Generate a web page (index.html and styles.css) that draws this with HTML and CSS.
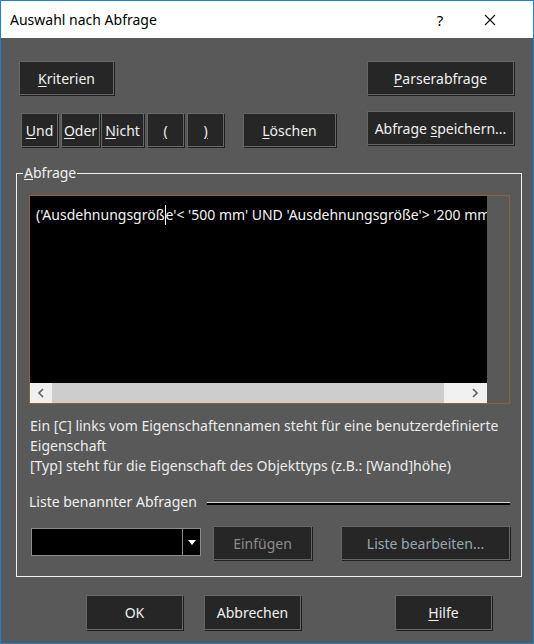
FILE: index.html
```html
<!DOCTYPE html>
<html lang="de">
<head>
  <meta charset="UTF-8">
  <title>Auswahl nach Abfrage</title>
  <link rel="stylesheet" href="styles.css">
</head>
<body>
  <div class="window">

    <!-- TITLE BAR -->
    <div class="titlebar">
      <span class="title">Auswahl nach Abfrage</span>
      <span class="help">?</span>
      <span class="close">
        <svg width="12" height="12" viewBox="0 0 12 12"><path d="M1 1 L11 11 M11 1 L1 11" stroke="#111" stroke-width="1.1" fill="none"/></svg>
      </span>
    </div>

    <div class="content">

      <!-- TOP BUTTONS -->
      <div class="row row-one">
        <button class="btn btn-kriterien"><u>K</u>riterien</button>
        <button class="btn btn-wide"><u>P</u>arserabfrage</button>
      </div>

      <div class="row row-two">
        <div class="ops">
          <button class="btn op-und"><u>U</u>nd</button>
          <button class="btn op-oder"><u>O</u>der</button>
          <button class="btn op-nicht"><u>N</u>icht</button>
          <button class="btn op-par"><u>(</u></button>
          <button class="btn op-par"><u>)</u></button>
          <button class="btn op-loeschen"><u>L</u>öschen</button>
        </div>
        <button class="btn btn-wide btn-save">Abfrage <u>s</u>peichern...</button>
      </div>

      <!-- QUERY GROUP -->
      <fieldset class="group">
        <legend><u>A</u>bfrage</legend>

        <div class="editor">
          <div class="editor-main">
            <div class="editor-text">
              <span class="line">('Ausdehnungsgrö<span class="ss">ß</span><span class="caret"></span>e'&lt; '500 mm' UND 'Ausdehnungsgröße'&gt; '200 mm')</span>
            </div>
            <div class="hscroll">
              <div class="arrow">
                <svg width="8" height="10" viewBox="0 0 8 10"><path d="M6 1 L2 5 L6 9" stroke="#606060" stroke-width="1.6" fill="none"/></svg>
              </div>
              <div class="thumb"></div>
              <div class="arrow arrow-right">
                <svg width="8" height="10" viewBox="0 0 8 10"><path d="M2 1 L6 5 L2 9" stroke="#606060" stroke-width="1.6" fill="none"/></svg>
              </div>
            </div>
          </div>
          <div class="editor-side"></div>
        </div>

        <div class="hint">
          Ein [C] links vom Eigenschaftennamen steht für eine benutzerdefinierte<br>
          Eigenschaft<br>
          [Typ] steht für die Eigenschaft des Objekttyps (z.B.: [Wand]höhe)
        </div>

        <div class="list-head">
          <span>Liste benannter Abfragen</span>
          <div class="etched"></div>
        </div>

        <div class="list-row">
          <div class="combo">
            <div class="combo-field"></div>
            <div class="combo-arrow">
              <svg width="8" height="5" viewBox="0 0 8 5"><path d="M0 0 L8 0 L4 5 Z" fill="#fff"/></svg>
            </div>
          </div>
          <button class="btn btn-disabled btn-insert">Einfügen</button>
          <button class="btn btn-disabled btn-edit">Liste bearbeiten...</button>
        </div>
      </fieldset>

      <!-- DIALOG BUTTONS -->
      <div class="footer">
        <button class="btn btn-dialog">OK</button>
        <button class="btn btn-dialog btn-cancel">Abbrechen</button>
        <button class="btn btn-dialog btn-hilfe"><u>H</u>ilfe</button>
      </div>

    </div>
  </div>
</body>
</html>
```

FILE: styles.css
```css
* {
  box-sizing: border-box;
}

body {
  margin: 0;
  font-family: "Noto Sans", "Open Sans", sans-serif;
  font-size: 14px;
  color: #f0f0f0;
}

/* WINDOW */
.window {
  width: 534px;
  height: 644px;
  border: 1px solid #1883d7;
  background: #595959;
  display: flex;
  flex-direction: column;
}

.titlebar {
  height: 37px;
  background: #fff;
  color: #000;
  display: flex;
  align-items: center;
  padding-left: 9px;
  font-size: 14px;
}

.title {
  flex: 1;
}

.help {
  width: 16px;
  margin-right: 36px;
  font-size: 15px;
  text-align: center;
}

.close {
  width: 12px;
  margin-right: 37px;
  display: flex;
}

.content {
  flex: 1;
  display: flex;
  flex-direction: column;
}

/* BUTTONS */
.btn {
  font-family: inherit;
  font-size: 14px;
  color: #f0f0f0;
  background: #262626;
  border: 1px solid #626868;
  box-shadow: 1px 1px 0 #202020;
  padding: 0;
  height: 34px;
  cursor: pointer;
  white-space: nowrap;
}

.btn u {
  text-underline-offset: 2px;
}

.row {
  display: flex;
  justify-content: space-between;
  align-items: flex-start;
  padding: 0 19px 0 18px;
}

.row-one {
  margin-top: 23px;
}

.row-two {
  margin-top: 16px;
}

.btn-kriterien {
  width: 95px;
}

.btn-wide {
  width: 147px;
}

.ops {
  display: flex;
  margin-top: 2px;
  margin-left: 2px;
}

.op-und { width: 37px; }
.op-oder { width: 39px; margin-left: 3px; }
.op-nicht { width: 43px; margin-left: 1px; }
.op-par { width: 37px; margin-left: 3px; }
.op-loeschen { width: 93px; margin-left: 19px; }

/* GROUP BOX */
.group {
  margin: 18px 13px 0 15px;
  border: 1px solid #f2f2f2;
  padding: 0 11px 16px 12px;
}

.group legend {
  padding: 0 1px;
  margin-left: -6px;
  font-size: 14px;
  line-height: 16px;
}

.editor {
  margin-top: 14px;
  border: 1px solid #8c6238;
  height: 209px;
  display: flex;
}

.editor-main {
  width: 457px;
  display: flex;
  flex-direction: column;
}

.editor-text {
  flex: 1;
  background: #000;
  padding: 9px 0 0 6px;
  white-space: nowrap;
  overflow: hidden;
  color: #f4f4f4;
  font-size: 14px;
}

.caret {
  display: inline-block;
  width: 1px;
  height: 20px;
  background: #fff;
  vertical-align: -5px;
}

.hscroll {
  height: 20px;
  display: flex;
  background: #f0f0f0;
}

.arrow {
  width: 22px;
  display: flex;
  align-items: center;
  justify-content: center;
}

.thumb {
  width: 392px;
  background: #cdcdcd;
}

.arrow-right {
  margin-left: auto;
  justify-content: flex-end;
  padding-right: 8px;
  width: 43px;
}

.editor-side {
  flex: 1;
}

.hint {
  margin: 12px 0 0 1px;
  line-height: 20px;
  font-size: 14px;
  color: #ececec;
  white-space: nowrap;
}

.list-head {
  display: flex;
  align-items: center;
  margin-top: 16px;
  font-size: 14px;
}

.etched {
  flex: 1;
  margin-left: 10px;
  margin-top: 3px;
  border-top: 1px solid #d8d8d8;
  border-bottom: 2px solid #000;
}

.list-row {
  display: flex;
  align-items: flex-start;
  margin-top: 15px;
}

.combo {
  width: 170px;
  height: 28px;
  margin-top: 2px;
  margin-left: 2px;
  border: 1px solid #8c8c8c;
  display: flex;
}

.combo-field {
  flex: 1;
  background: #000;
}

.combo-arrow {
  width: 18px;
  background: #000;
  border-left: 1px solid #8c8c8c;
  display: flex;
  align-items: center;
  justify-content: center;
}

.btn-disabled {
  color: #8c8c8c;
}

.btn-insert {
  width: 99px;
  margin-left: 12px;
}

.btn-edit {
  width: 169px;
  margin-left: 29px;
  color: #9aa6b2;
}

/* FOOTER */
.footer {
  display: flex;
  margin-top: 18px;
  padding-left: 85px;
}

.btn-dialog {
  width: 97px;
  height: 35px;
}

.btn-cancel {
  margin-left: 21px;
}

.btn-hilfe {
  margin-left: 94px;
}
```
